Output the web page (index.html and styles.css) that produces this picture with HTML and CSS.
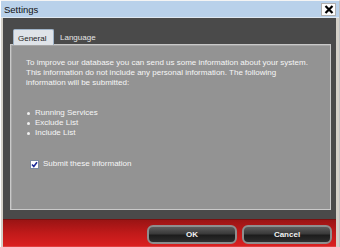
FILE: index.html
```html
<!DOCTYPE html>
<html>
<head>
<meta charset="utf-8">
<link rel="stylesheet" href="styles.css">
</head>
<body>
<div class="window">
  <div class="titlebar">
    <span class="title">Settings</span>
    <span class="close">
      <svg width="10" height="9" viewBox="0 0 10 9"><path d="M1.5 1 L8.5 8 M8.5 1 L1.5 8" stroke="#000" stroke-width="2.2" fill="none"/></svg>
    </span>
  </div>
  <div class="body">
    <div class="tabs">
      <div class="tab active">General</div>
      <div class="tab">Language</div>
    </div>
    <div class="panel">
      <p class="intro">To improve our database you can send us some information about your system.<br>This information do not include any personal information. The following<br>information will be submitted:</p>
      <ul class="list">
        <li>Running Services</li>
        <li>Exclude List</li>
        <li>Include List</li>
      </ul>
      <label class="check"><span class="box"><svg width="7" height="7" viewBox="0 0 7 7"><path d="M1 3.5 L2.8 5.5 L6 1.2" stroke="#1a2a9a" stroke-width="1.6" fill="none"/></svg></span>Submit these information</label>
    </div>
  </div>
  <div class="footer">
    <div class="btn">OK</div>
    <div class="btn">Cancel</div>
  </div>
</div>
</body>
</html>
```
FILE: styles.css
```css
html, body {
  margin: 0;
  padding: 0;
  background: #fff;
}
.window {
  width: 340px;
  height: 247px;
  box-sizing: border-box;
  background: #d4d0c8;
  border-top: 1px solid #f4f4f4;
  border-left: 1px solid #ffffff;
  border-right: 1px solid #c0c0c0;
  display: flex;
  flex-direction: column;
  font-family: "Liberation Sans", Arial, sans-serif;
}
.titlebar {
  height: 16px;
  background: #b9d1ea;
  display: flex;
  align-items: center;
  justify-content: space-between;
  padding: 0 3px 0 3px;
  border-bottom: 1px solid #dfe8f1;
}
.title {
  font-size: 9.5px;
  color: #111;
}
.close {
  width: 13px;
  height: 11px;
  background: #fdfdfd;
  border: 1px solid #b0b0b0;
  display: flex;
  align-items: center;
  justify-content: center;
}
.body {
  flex: 1;
  background: #4a4a4a;
  margin: 0 3px 0 2px;
  padding: 11px 5px 9px 7px;
  display: flex;
  flex-direction: column;
}
.tabs {
  display: flex;
  align-items: flex-end;
  height: 16px;
  padding-left: 3px;
  position: relative;
  z-index: 1;
}
.tab {
  font-size: 8px;
  color: #e6e6e6;
  padding: 0 6px 3px 6px;
}
.tab.active {
  background: #dfe3e8;
  color: #1c1c1c;
  height: 16px;
  box-sizing: border-box;
  padding: 4px 5px 0 4px;
  border: 1px solid #9fb3c8;
  border-bottom: none;
  border-radius: 2px 2px 0 0;
  width: 41px;
}
.panel {
  flex: 1;
  background: #939393;
  border: 1px solid #c9c9c9;
  box-shadow: inset 1px 1px 0 #a6a6a6;
  padding: 13px 8px 0 15px;
  color: #f6f6f6;
  font-size: 8px;
  line-height: 10px;
  margin-top: -1px;
}
.intro {
  margin: 0;
  white-space: nowrap;
}
.list {
  margin: 20px 0 0 0;
  padding: 0 0 0 9px;
  list-style: none;
}
.list li {
  position: relative;
}
.list li::before {
  content: "";
  position: absolute;
  left: -8px;
  top: 4px;
  width: 3px;
  height: 3px;
  border-radius: 50%;
  background: #f0f0f0;
}
.check {
  display: flex;
  align-items: center;
  margin: 21px 0 0 4px;
  gap: 4px;
}
.box {
  width: 7px;
  height: 7px;
  background: #fff;
  border: 1px solid #7a8aa0;
  display: flex;
  align-items: center;
  justify-content: center;
}
.footer {
  height: 28px;
  margin: 0 3px 0 2px;
  box-sizing: border-box;
  background: linear-gradient(#9a1414, #c01a1a 50%, #da2020);
  border-top: 1px solid #7a1010;
  border-bottom: 1px solid #e04040;
  display: flex;
  justify-content: flex-end;
  align-items: flex-start;
  padding: 5px 4px 0 0;
  gap: 5px;
}
.btn {
  width: 90px;
  height: 19px;
  box-sizing: border-box;
  border: 2px solid #8e8e8e;
  border-radius: 6px;
  background: linear-gradient(#5c5c5c, #3a3a3a 45%, #1c1c1c 55%, #2e2e2e);
  color: #f2f2f2;
  font-weight: bold;
  font-size: 8px;
  display: flex;
  align-items: center;
  justify-content: center;
}
```
